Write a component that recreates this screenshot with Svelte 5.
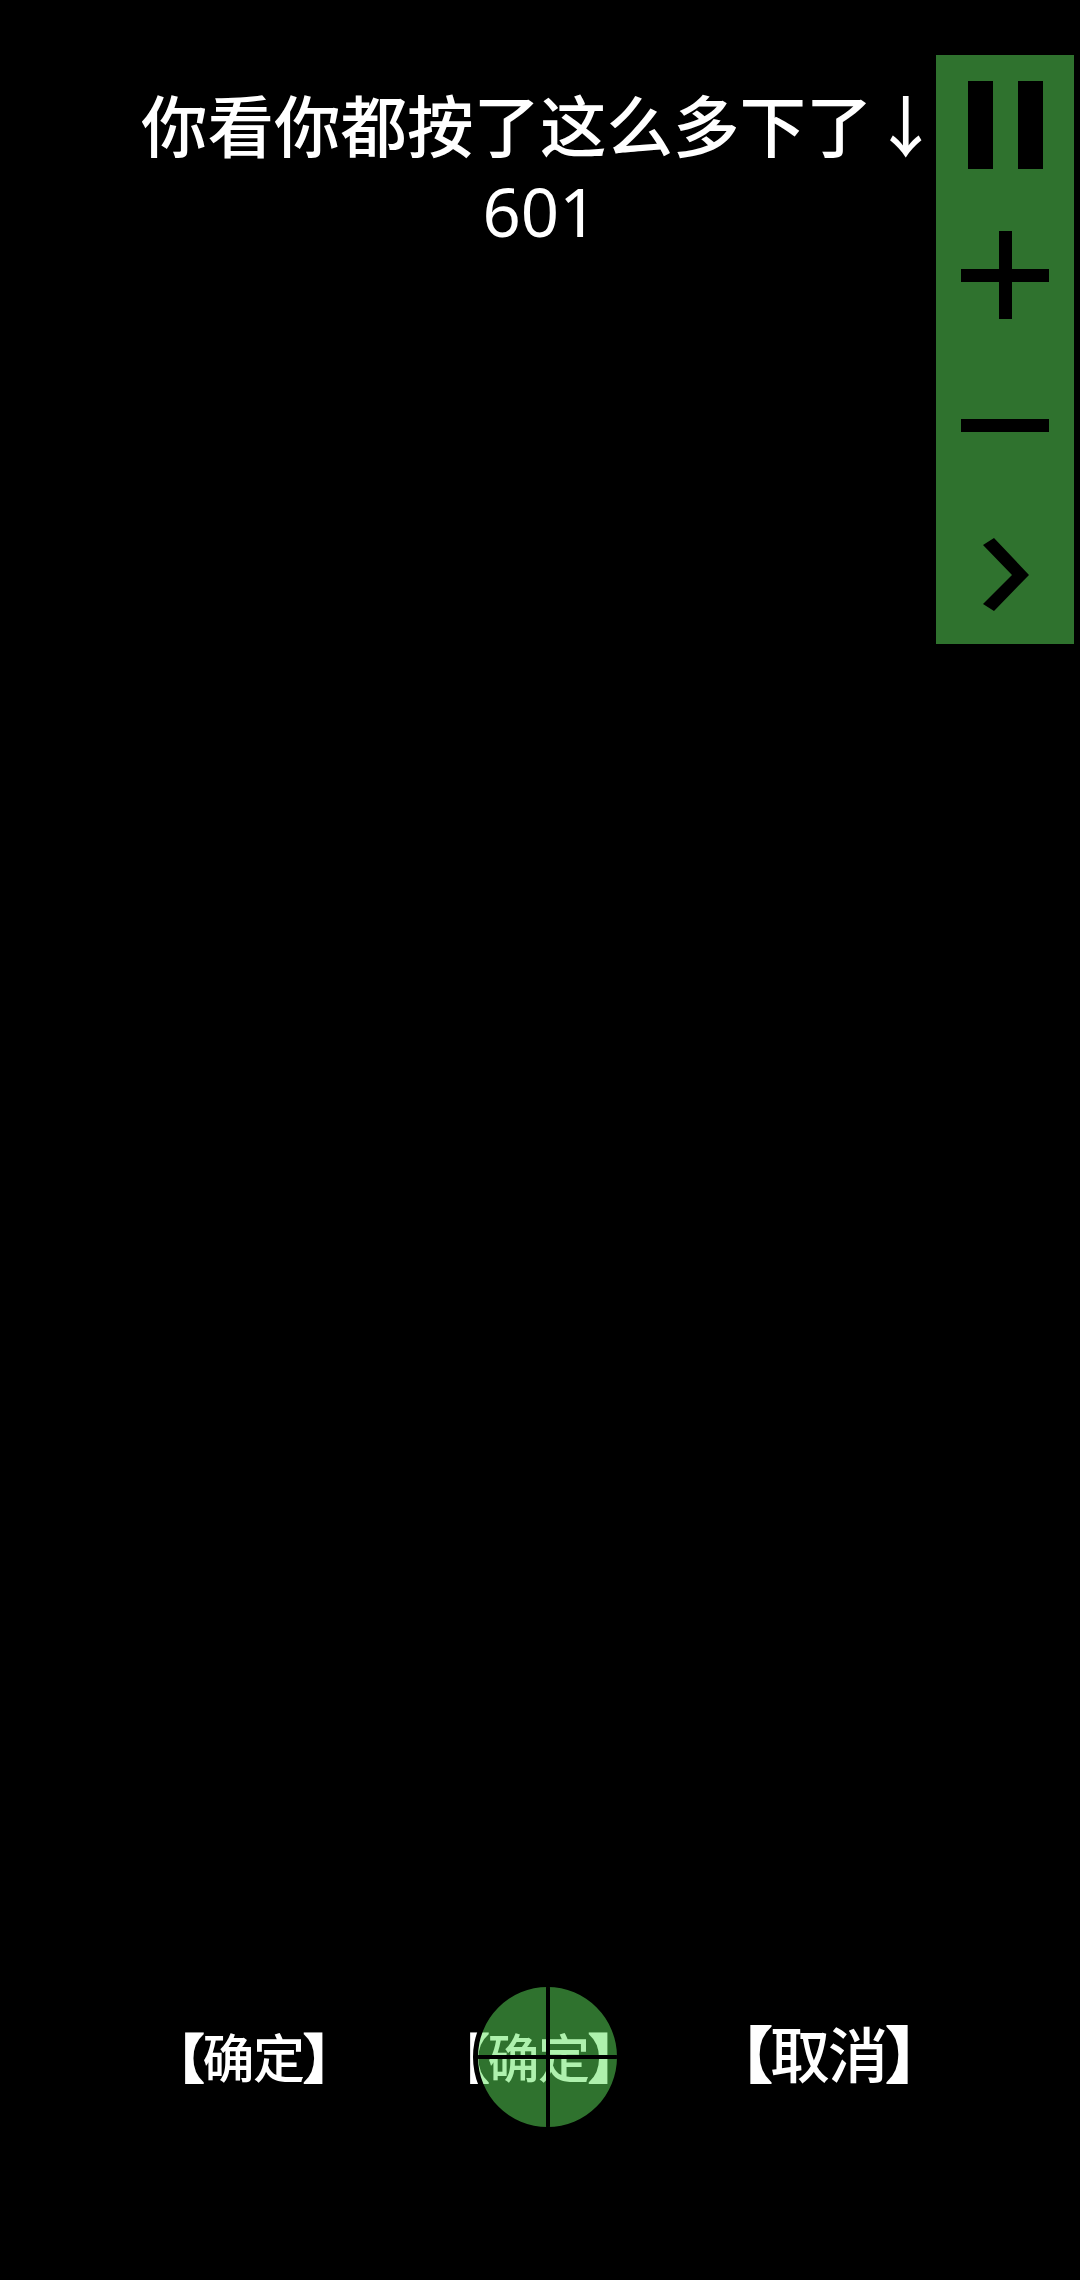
<script>
  const actions = [
    { label: '确定', size: 'small' },
    { label: '确定', size: 'small' },
    { label: '取消', size: 'large' }
  ];
</script>

<main class="screen">
  <header class="counter">
    <p class="message">你看你都按了这么多下了↓</p>
    <p class="count">601</p>
  </header>

  <aside class="panel">
    <svg class="tool" viewBox="0 0 138 147" aria-label="pause">
      <rect x="32" y="26" width="25" height="88" />
      <rect x="82" y="26" width="25" height="88" />
    </svg>
    <svg class="tool" viewBox="0 0 138 147" aria-label="add">
      <rect x="25" y="67" width="88" height="13" />
      <rect x="63" y="29" width="13" height="88" />
    </svg>
    <svg class="tool" viewBox="0 0 138 147" aria-label="remove">
      <rect x="25" y="70" width="88" height="13" />
    </svg>
    <svg class="tool" viewBox="0 0 138 147" aria-label="next">
      <polygon points="58,42 93,79 58,115 47,108 76,79 47,49" />
    </svg>
  </aside>

  <div class="actions">
    {#each actions as action}
      <span class="action {action.size}"><b>【</b>{action.label}<b>】</b></span>
    {/each}
  </div>

  <div class="touch">
    <span class="axis vertical"></span>
    <span class="axis horizontal"></span>
  </div>
</main>

<style>
  :global(body) {
    margin: 0;
    background: #000;
  }

  .screen {
    position: relative;
    height: 2280px;
    overflow: hidden;
    background: #000;
    color: #fff;
    font-family: "Noto Sans CJK SC", "Noto Sans", sans-serif;
  }

  .counter {
    width: 1080px;
    padding-top: 83px;
    text-align: center;
  }

  .message {
    margin: 0;
    font-size: 66.5px;
    line-height: 80px;
    font-weight: 500;
    white-space: nowrap;
  }

  .count {
    margin: 4px 0 0;
    font-family: "Noto Sans", sans-serif;
    font-size: 67px;
    line-height: 88px;
  }

  .panel {
    position: absolute;
    top: 55px;
    left: 936px;
    width: 138px;
    height: 589px;
    display: flex;
    flex-direction: column;
    background: #2f722e;
  }

  .tool {
    display: block;
    width: 138px;
    height: 147px;
    flex: none;
    fill: #000;
  }

  .actions {
    position: absolute;
    left: 0;
    right: 0;
    top: 1992px;
    height: 90px;
    display: grid;
    grid-template-columns: 285px 275px auto;
    align-items: end;
    padding-left: 152px;
  }

  .action {
    white-space: nowrap;
    line-height: 1;
    font-weight: 500;
  }

  .action b {
    font-weight: 900;
    -webkit-text-stroke: 2px #fff;
  }

  .small {
    font-size: 52px;
    letter-spacing: -1.5px;
  }

  .large {
    font-size: 60px;
    letter-spacing: -2px;
  }

  .touch {
    position: absolute;
    left: 473px;
    top: 1982px;
    width: 139px;
    height: 140px;
    border: 5px solid #000;
    border-radius: 50%;
    background: rgba(94, 228, 92, 0.5);
    overflow: hidden;
  }

  .axis {
    position: absolute;
    background: #000;
  }

  .vertical {
    left: 68px;
    top: 0;
    width: 4px;
    height: 100%;
  }

  .horizontal {
    left: 0;
    top: 68px;
    width: 100%;
    height: 4px;
  }
</style>
